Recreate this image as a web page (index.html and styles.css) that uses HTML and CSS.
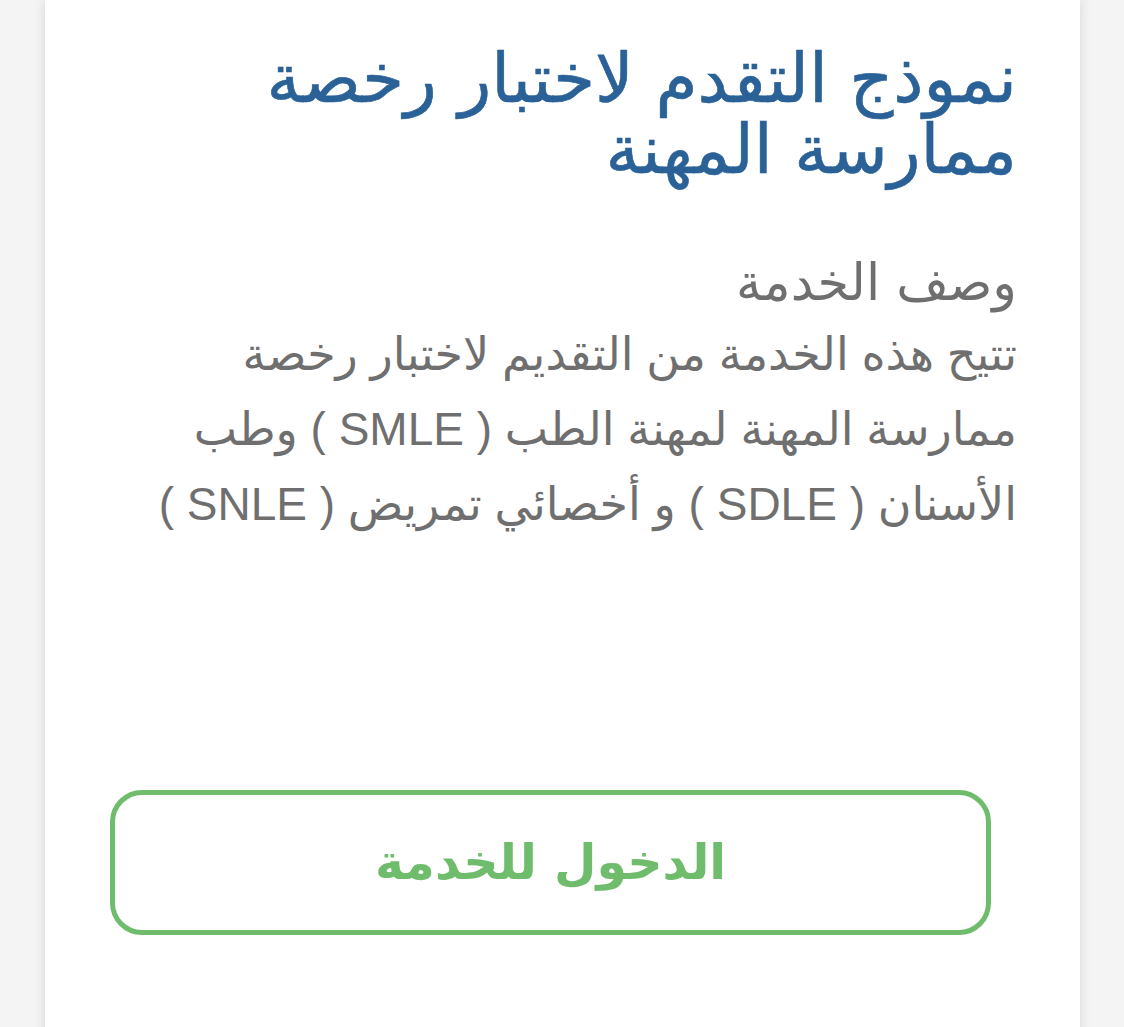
FILE: index.html
```html
<!DOCTYPE html>
<html lang="ar">
<head>
<meta charset="utf-8">
<link rel="stylesheet" href="styles.css">
</head>
<body>
<div class="card" dir="rtl">
  <h1 class="title">نموذج التقدم لاختبار رخصة<br>ممارسة المهنة</h1>
  <div class="desc">
    <h2 class="desc-head">وصف الخدمة</h2>
    <p class="desc-body">تتيح هذه الخدمة من التقديم لاختبار رخصة<br>ممارسة المهنة لمهنة الطب ( SMLE ) وطب<br>الأسنان ( SDLE ) و أخصائي تمريض ( SNLE )</p>
  </div>
  <div class="actions">
    <a class="btn" href="#">الدخول للخدمة</a>
  </div>
</div>
</body>
</html>
```
FILE: styles.css
```css
html, body {
  margin: 0;
  padding: 0;
  background: #f4f4f4;
  height: 100%;
  overflow: hidden;
}
.card {
  margin: 0 44px 0 45px;
  min-height: 1100px;
  background: #fff;
  box-shadow: 0 0 12px rgba(0,0,0,0.13);
  box-sizing: border-box;
  padding: 43px 63px 0 65px;
  font-family: "DejaVu Sans", sans-serif;
}
.title {
  margin: 0;
  color: #2a6197;
  font-size: 68px;
  font-weight: normal;
  line-height: 71px;
  text-align: right;
  -webkit-text-stroke: 0.6px #2a6197;
}
.desc {
  margin-top: 68px;
  color: #6f6f6f;
}
.desc-head {
  margin: 0;
  font-size: 51px;
  font-weight: normal;
  line-height: 60px;
}
.desc-body {
  margin: 4px 0 0;
  font-family: "Liberation Sans", "DejaVu Sans", sans-serif;
  font-size: 46px;
  line-height: 75px;
}
.actions {
  margin-top: 248px;
  display: flex;
  justify-content: flex-end;
}
.btn {
  display: flex;
  align-items: center;
  justify-content: center;
  width: 881px;
  height: 145px;
  box-sizing: border-box;
  border: 5px solid #6fbd6c;
  border-radius: 32px;
  color: #6fbd6c;
  font-size: 49px;
  font-weight: bold;
  text-decoration: none;
}
```
